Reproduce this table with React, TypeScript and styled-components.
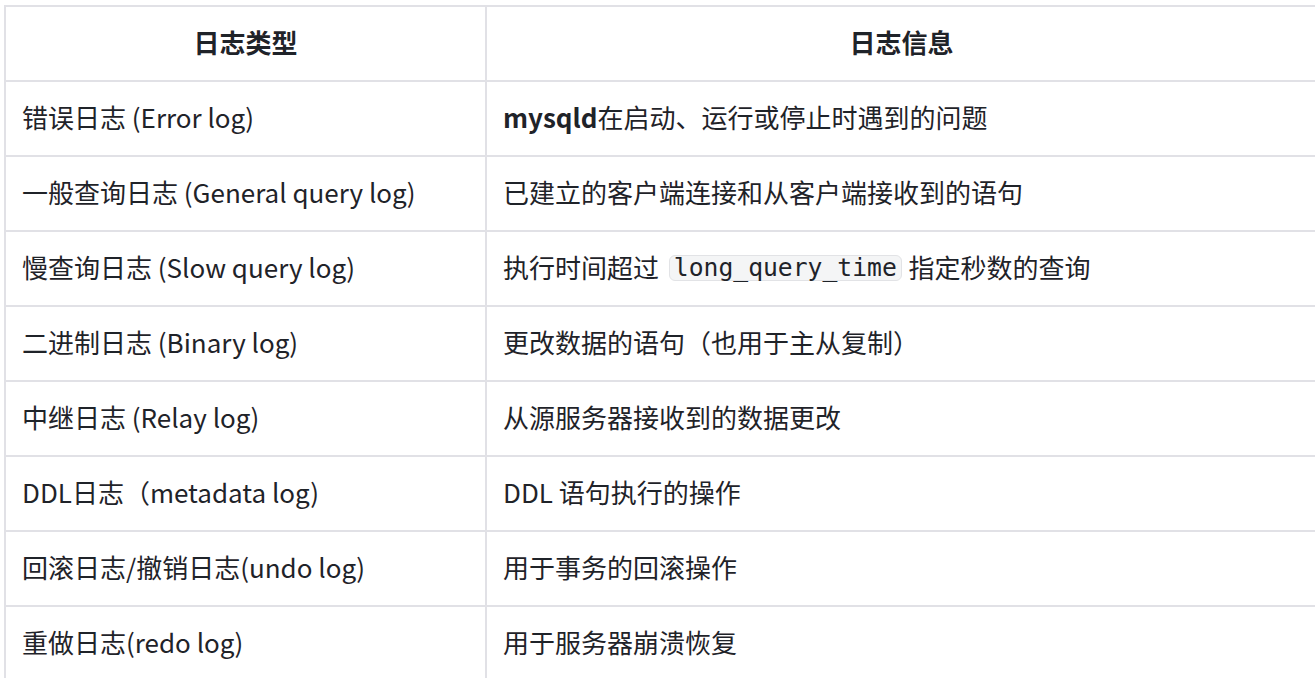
import styled, { createGlobalStyle } from 'styled-components';

const GlobalStyle = createGlobalStyle`
  html, body {
    margin: 0;
    padding: 0;
    overflow: hidden;
    background: #ffffff;
  }
`;

const Page = styled.div`
  padding: 5px 0 0 4px;
  font-family: "Noto Sans CJK SC", "Noto Sans", sans-serif;
  color: #1f2329;
`;

const Table = styled.table`
  width: 1314px;
  border-collapse: separate;
  border-spacing: 0;
  border-top: 2px solid #e1e1e6;
  border-left: 2px solid #e1e1e6;
  font-size: 26px;
  line-height: 34px;
`;

const HeadCell = styled.th<{ $wide?: boolean }>`
  width: ${(p) => (p.$wide ? 'auto' : '481px')};
  height: 75px;
  padding: 0 16px 4px;
  box-sizing: border-box;
  text-align: center;
  font-weight: 700;
  border-right: 2px solid #e1e1e6;
  border-bottom: 2px solid #e1e1e6;
`;

const Cell = styled.td`
  height: 75px;
  padding: 0 16px 4px;
  box-sizing: border-box;
  text-align: left;
  vertical-align: middle;
  border-right: 2px solid #e1e1e6;
  border-bottom: 2px solid #e1e1e6;
  white-space: nowrap;
`;

const Code = styled.code`
  font-family: "DejaVu Sans Mono", "Liberation Mono", monospace;
  font-size: 24.7px;
  line-height: 24px;
  padding: 0 4px;
  margin: 0 1px 0 4px;
  background: #f4f5f6;
  border: 1px solid #e2e3e6;
  border-radius: 6px;
  display: inline-block;
  vertical-align: 2px;
`;

const rows: { type: string; info: React.ReactNode }[] = [
  { type: '错误日志 (Error log)', info: <><strong>mysqld</strong>在启动、运行或停止时遇到的问题</> },
  { type: '一般查询日志 (General query log)', info: '已建立的客户端连接和从客户端接收到的语句' },
  { type: '慢查询日志 (Slow query log)', info: <>执行时间超过 <Code>long_query_time</Code> 指定秒数的查询</> },
  { type: '二进制日志 (Binary log)', info: '更改数据的语句（也用于主从复制）' },
  { type: '中继日志 (Relay log)', info: '从源服务器接收到的数据更改' },
  { type: 'DDL日志（metadata log)', info: 'DDL 语句执行的操作' },
  { type: '回滚日志/撤销日志(undo log)', info: '用于事务的回滚操作' },
  { type: '重做日志(redo log)', info: '用于服务器崩溃恢复' },
];

export default function App() {
  return (
    <Page>
      <GlobalStyle />
      <Table>
        <thead>
          <tr>
            <HeadCell>日志类型</HeadCell>
            <HeadCell $wide>日志信息</HeadCell>
          </tr>
        </thead>
        <tbody>
          {rows.map((r) => (
            <tr key={r.type}>
              <Cell>{r.type}</Cell>
              <Cell>{r.info}</Cell>
            </tr>
          ))}
        </tbody>
      </Table>
    </Page>
  );
}
